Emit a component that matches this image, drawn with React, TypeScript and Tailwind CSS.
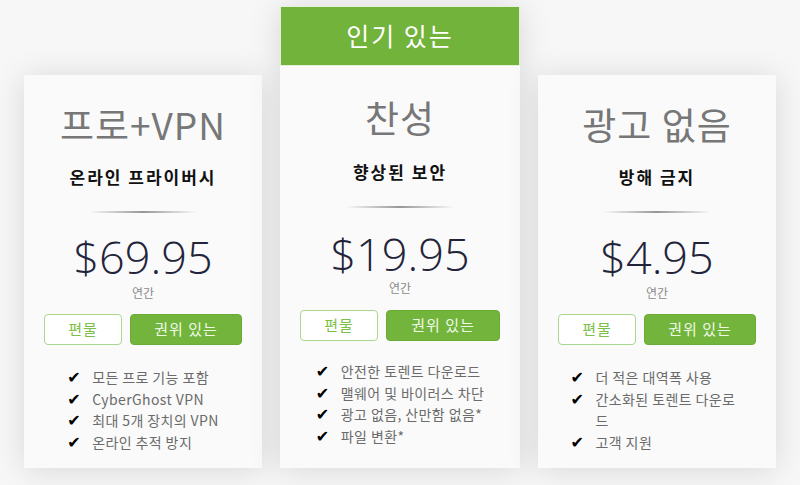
import React from "react";

type Plan = {
  title: string;
  subtitle: string;
  price: string;
  features: string[];
  popular?: boolean;
};

const plans: Plan[] = [
  {
    title: "프로+VPN",
    subtitle: "온라인 프라이버시",
    price: "$69.95",
    features: ["모든 프로 기능 포함", "CyberGhost VPN", "최대 5개 장치의 VPN", "온라인 추적 방지"],
  },
  {
    title: "찬성",
    subtitle: "향상된 보안",
    price: "$19.95",
    features: ["안전한 토렌트 다운로드", "맬웨어 및 바이러스 차단", "광고 없음, 산만함 없음*", "파일 변환*"],
    popular: true,
  },
  {
    title: "광고 없음",
    subtitle: "방해 금지",
    price: "$4.95",
    features: ["더 적은 대역폭 사용", "간소화된 토렌트 다운로드", "고객 지원"],
  },
];

const kr = "font-['Noto_Sans_CJK_KR','Noto_Sans',sans-serif]";

function CardBody({ plan }: { plan: Plan }) {
  const pop = !!plan.popular;
  return (
    <div className={`flex flex-col items-center ${pop ? "pt-[31px]" : "pt-[29px]"}`}>
      <div className={`text-[37px] leading-[40px] tracking-[1px] text-[#777777] ${kr}`}>{plan.title}</div>
      <div
        className={`${pop ? "mt-[23px]" : "mt-[21px]"} text-[17px] leading-[24px] font-bold text-[#111111] tracking-[2px] ${kr}`}
      >
        {plan.subtitle}
      </div>
      <div className="mt-[22px] h-[2px] w-[108px] bg-[linear-gradient(90deg,rgba(150,150,150,0),rgba(140,140,140,0.9)_50%,rgba(150,150,150,0))]" />
      <div
        className={`${pop ? "mt-[22px]" : "mt-[20px]"} text-[45px] leading-[48px] font-light text-[#23243a] font-['Open_Sans','Noto_Sans',sans-serif]`}
      >
        {plan.price}
      </div>
      <div className={`${pop ? "mt-[2px]" : "mt-[4px]"} text-[12px] leading-[16px] text-[#8a8a8a] ${kr}`}>연간</div>
      <div className={`${pop ? "mt-[14px]" : "mt-[13px]"} flex w-full gap-[8px] px-[20px]`}>
        <button
          className={`h-[31px] w-[78px] rounded-[4px] border-[1.5px] border-[#a9d78e] bg-white text-[15px] tracking-[1px] text-[#7cc04a] ${kr}`}
        >
          편물
        </button>
        <button
          className={`h-[31px] flex-1 rounded-[4px] border border-[#6aab35] bg-[#73b53c] text-[15px] tracking-[1px] text-[#eef8e6] ${kr}`}
        >
          권위 있는
        </button>
      </div>
      <ul className={`${pop ? "mt-[20px]" : "mt-[22px]"} inline-block text-left`}>
        {plan.features.map((f) => (
          <li key={f} className="flex text-[14px] leading-[21.5px]">
            <span className="w-[25px] shrink-0 text-[16px] leading-[21.5px] text-black font-['DejaVu_Sans',sans-serif]">✔</span>
            <span className={`max-w-[148px] tracking-[0.4px] text-[#6b6b6b] ${kr}`}>{f}</span>
          </li>
        ))}
      </ul>
    </div>
  );
}

export default function App() {
  return (
    <div className="flex h-[485px] w-[800px] items-end justify-center gap-[18px] overflow-hidden bg-[#f7f7f7] pb-[17px]">
      {plans.map((p) =>
        p.popular ? (
          <div
            key={p.title}
            className="flex h-[462px] w-[240px] flex-col bg-[#fafafa] shadow-[0_2px_30px_rgba(0,0,0,0.13)]"
          >
            <div
              className={`flex h-[60px] items-center justify-center border border-[#e4f0da] bg-[#72b33b] text-[25px] tracking-[2px] text-white ${kr}`}
            >
              인기 있는
            </div>
            <CardBody plan={p} />
          </div>
        ) : (
          <div
            key={p.title}
            className="h-[393px] w-[238px] bg-[#fafafa] shadow-[0_2px_30px_rgba(0,0,0,0.13)]"
          >
            <CardBody plan={p} />
          </div>
        )
      )}
    </div>
  );
}
